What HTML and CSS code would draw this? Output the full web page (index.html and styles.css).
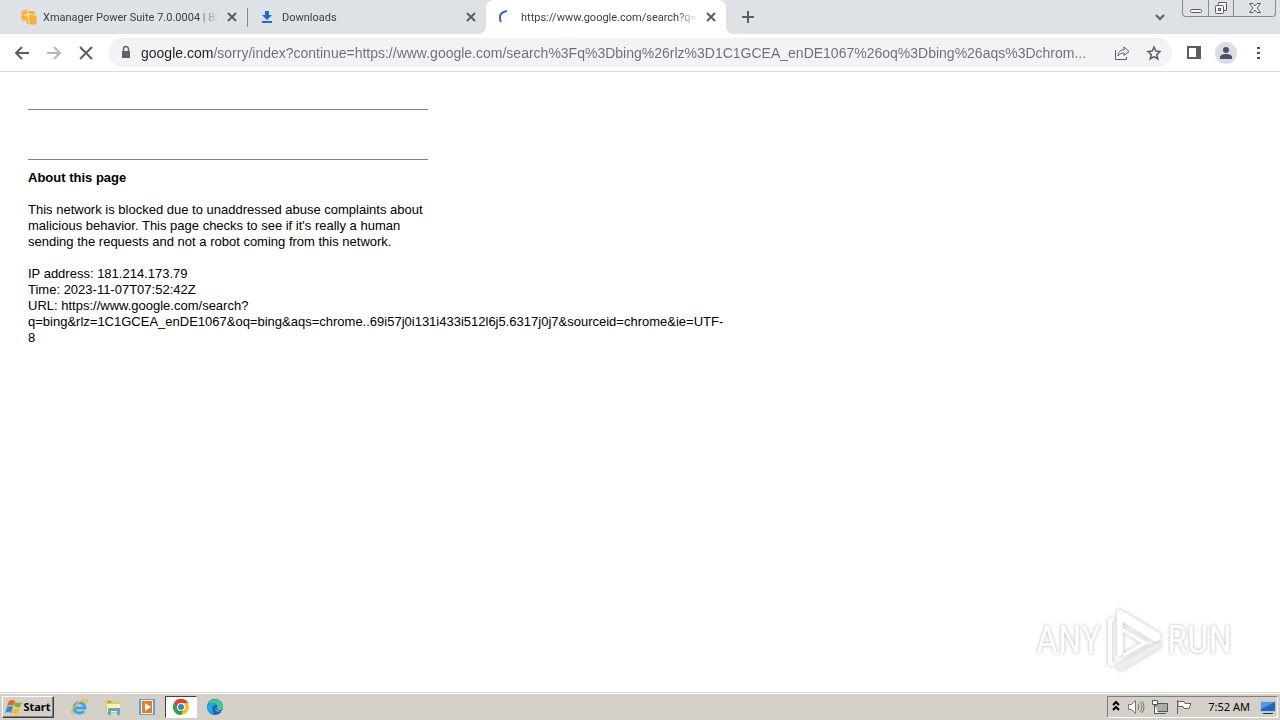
FILE: index.html
```
<!DOCTYPE html>
<html lang="en">
<head>
    <meta charset="utf-8">
    <title>https://www.google.com/search?q=bing</title>
    <link rel="stylesheet" href="styles.css">
</head>
<body>

<header class="browser">
    <div class="tabstrip">
        <div class="tabs">
            <div class="tab">
                <svg class="favicon" viewBox="0 0 16 16"><path fill="#fbb03b" d="M0 3l6-3 2 2h5l2 3 1 9-3 2-7-1-1-4-3 1-2-3 1-2z"/><path d="M6 1l1 4 8 1M3 6l4 0 1 9" fill="none" stroke="#fff3d9"/></svg>
                <span class="tab-title">Xmanager Power Suite 7.0.0004 | Br</span>
                <button class="close" aria-label="Close tab"><svg viewBox="0 0 16 16"><path d="M4 4l8 8M12 4l-8 8"/></svg></button>
            </div>
            <div class="tab divided">
                <svg class="favicon" viewBox="0 0 16 16"><path fill="#1a6dd8" d="M5 2h4v4h3l-5 5-5-5h3zM2 12h10v2H2z"/></svg>
                <span class="tab-title">Downloads</span>
                <button class="close" aria-label="Close tab"><svg viewBox="0 0 16 16"><path d="M4 4l8 8M12 4l-8 8"/></svg></button>
            </div>
            <div class="tab active">
                <svg class="favicon" viewBox="0 0 16 16"><path fill="none" stroke="#3c62d6" stroke-width="2" d="M8 2Q-2 4 2 13"/></svg>
                <span class="tab-title">https://www.google.com/search?q=</span>
                <button class="close" aria-label="Close tab"><svg viewBox="0 0 16 16"><path d="M4 4l8 8M12 4l-8 8"/></svg></button>
            </div>
            <button class="newtab" aria-label="New tab"><svg viewBox="0 0 16 16"><path d="M8 2v12M2 8h12"/></svg></button>
        </div>
        <button class="tabsearch" aria-label="Search tabs"><svg viewBox="0 0 16 16"><path d="M4 6l4 4 4-4"/></svg></button>
        <div class="winctl">
            <button aria-label="Minimize"><svg viewBox="0 0 16 16"><rect x="2.500" y="9.500" width="11" height="3" rx="1"/></svg></button>
            <button aria-label="Restore"><svg viewBox="0 0 16 16"><path d="M5.500 4.500v-2h8v8h-3"/><rect x="2.500" y="5.500" width="8" height="8" rx="1"/><rect x="5.500" y="8.500" width="2" height="2"/></svg></button>
            <button class="wide" aria-label="Close"><svg viewBox="0 0 16 16"><path d="M2.500 3.500h3.500l2 2.500 2-2.500h3.500l-3.500 4.500 3.500 4.500h-3.500l-2-2.500-2 2.500h-3.500l3.500-4.500z"/></svg></button>
        </div>
    </div>
    <div class="toolbar">
        <button class="tool" aria-label="Back"><svg viewBox="0 0 16 16"><path d="M15 8H2M8 2L2 8l6 6"/></svg></button>
        <button class="tool off" aria-label="Forward" disabled><svg viewBox="0 0 16 16"><path d="M1 8h13M8 2l6 6-6 6"/></svg></button>
        <button class="tool" aria-label="Stop"><svg viewBox="0 0 16 16"><path d="M2 2l12 12M14 2L2 14"/></svg></button>
        <div class="omnibox">
            <svg class="lock" viewBox="0 0 16 16"><path fill="#5f6368" d="M4 6h8v7H4z"/><path fill="none" stroke="#5f6368" stroke-width="1.500" d="M5.500 7V4a2.500 2.500 0 0 1 5 0v3"/></svg>
            <input class="url" type="text" aria-label="Address" value="google.com/sorry/index?continue=https://www.google.com/search%3Fq%3Dbing%26rlz%3D1C1GCEA_enDE1067%26oq%3Dbing%26aqs%3Dchrom...">
            <button class="tool" aria-label="Share"><svg viewBox="0 0 16 16"><path class="thin" d="M1.500 5v9.500h11V12M4 11c0-4 2-6 6-6V2l5 4.500-5 4V8c-3 0-4 1-6 3z"/></svg></button>
            <button class="tool" aria-label="Bookmark"><svg viewBox="0 0 16 16"><path class="star" d="M8 2l1.800 4 4.200.5-3.200 3 1 4.500L8 11.700 4.200 14l1-4.500L2 6.500 6.200 6z"/></svg></button>
        </div>
        <button class="tool" aria-label="Side panel"><svg viewBox="0 0 16 16"><path d="M2 2h12v11H2z"/><path d="M12 2v11" stroke-width="4"/></svg></button>
        <button class="tool" aria-label="Profile"><svg class="avatar" viewBox="0 0 22 22"><circle cx="11" cy="11" r="11" fill="#dadde2"/><circle cx="11" cy="8" r="3" fill="#47526e"/><path fill="#47526e" d="M5 17v-2c0-4 12-4 12 0v2z"/></svg></button>
        <button class="tool" aria-label="Menu"><svg viewBox="0 0 16 16"><path class="dots" d="M7 2h3v2H7zM7 7h3v2H7zM7 12h3v2H7z"/></svg></button>
    </div>
</header>

<main class="page">
    <div class="notice">
        <hr>
        <div class="captcha"></div>
        <hr>
        <div class="about">
            <b>About this page</b>
            <p>This network is blocked due to unaddressed abuse complaints about malicious behavior. This page checks to see if it's really a human sending the requests and not a robot coming from this network.</p>
            IP address: 181.214.173.79<br>
            Time: 2023-11-07T07:52:42Z<br>
            URL: https://www.google.com/search?<br>q=bing&amp;rlz=1C1GCEA_enDE1067&amp;oq=bing&amp;aqs=chrome..69i57j0i131i433i512l6j5.6317j0j7&amp;sourceid=chrome&amp;ie=UTF-<wbr>8
        </div>
    </div>
    <div class="watermark">
        <span>ANY</span>
        <svg viewBox="0 0 58 64"><path d="M9 9L3 11v46l6 2v-4l-2-2V14l2-1zM12 3l4-1 40 24-1 6-5 2-32-20v32l-6 4zM18 20l26 15-26 14v-3l18-11-18-11z"/><path class="shade" d="M12 57l38-21 6-2v5L17 62l-5-1z"/></svg>
        <span>RUN</span>
    </div>
</main>

<footer class="taskbar">
    <button class="start">
        <svg viewBox="0 0 18 16"><path fill="#e8602c" d="M4 2q3-2 6 0L8 7Q5 5 2 7z"/><path fill="#73b82c" d="M10 3q3 2 7 0l-2 5q-3 1-6-1z"/><path fill="#368bd6" d="M2 8q3-2 6 0l-2 6q-3-2-6 0z"/><path fill="#f8bd27" d="M8 9q3 2 7 0l-2 6q-3 1-6-1z"/></svg>
        Start
    </button>
    <nav class="apps">
        <button class="app" aria-label="Internet Explorer"><svg viewBox="0 0 18 18"><path fill="none" stroke="#35a5e5" stroke-width="3" d="M4 10h11c0-7-11-7-11 0 0 6 8 6 10 3"/><path fill="none" stroke="#efb92b" stroke-width="1.500" d="M3 16C-2 15 8 3 14 2c4-1 3 2 2 4"/></svg></button>
        <button class="app" aria-label="Explorer"><svg viewBox="0 0 18 18"><path fill="#e9c55c" d="M2 2h6l1 2h7v11H2z"/><path fill="#fff2ae" d="M3 6h13v8H3z"/><path fill="#54a9d7" d="M4 10h12v7h-3v-4H7v4H4z"/><path fill="#64b84b" d="M4 3h3v2H4z"/></svg></button>
        <button class="app" aria-label="Media Player"><svg viewBox="0 0 18 18"><path fill="#5da3db" d="M1 1h16v16H1z"/><path fill="#e6f2fa" d="M3 2h12v14H3z"/><path fill="#ef7d13" d="M4 3h10v12H4z"/><path fill="#fff" d="M7 5l6 4-6 4z"/></svg></button>
        <button class="app current" aria-label="Chrome"><svg viewBox="0 0 18 18"><circle cx="9" cy="9" r="8" fill="#f8c51c"/><path fill="#de4032" d="M2 5a8 8 0 0 1 14 0H9L6 11z"/><path fill="#2da04c" d="M2 5a8 8 0 0 0 7 12l3-6-6 0z"/><circle cx="9" cy="9" r="4" fill="#fff"/><circle cx="9" cy="9" r="3" fill="#3e7fe0"/></svg></button>
        <button class="app" aria-label="Edge"><svg viewBox="0 0 18 18"><circle cx="9" cy="9" r="8" fill="#1267b8"/><path fill="#42c99a" d="M2 6C5-1 17 0 17 9c0 4-6 4-6 1 2-4-4-6-9-4z"/><path fill="#22a8dc" d="M1 9c1-5 8-5 9-2-4 0-5 5-2 9-4 0-7-3-7-7z"/><path fill="#d4d0c8" d="M10 9c-2 4 2 6 7 3v2l-4-1c-3-1-4-2-3-4z"/></svg></button>
    </nav>
    <div class="tray">
        <svg class="more" viewBox="0 0 10 16"><path d="M2 6l3-3 3 3M2 11l3-3 3 3"/></svg>
        <svg viewBox="0 0 18 16"><path fill="#fff" stroke="#777" d="M1.500 5.500h3l4-4v13l-4-4h-3z"/><path fill="none" stroke="#777" d="M11 5q2 3 0 6M13 3q4 5 0 10M15 2q4 6 0 12"/></svg>
        <svg viewBox="0 0 18 16"><path fill="#aaa" stroke="#555" d="M4.500 4.500h12v8h-12zM7 14.500h8"/><path fill="#fff" stroke="#555" d="M1.500 1.500h5v4h-5zM3.500 5.500v9h4"/></svg>
        <svg viewBox="0 0 18 16"><path fill="#fff" stroke="#666" d="M2.500 1v14M3 2.500h6l1 2h6l-2 5H9l-1-2H3z"/></svg>
        <time class="clock">7:52 AM</time>
        <svg viewBox="0 0 18 16"><path fill="#2865b8" stroke="#adc8e6" d="M1.500 2.500h15v10h-15z"/><path fill="#5596dc" d="M2 3h14L2 10z"/><path stroke="#234" d="M4 14.500h10"/></svg>
    </div>
</footer>

</body>
</html>
```
FILE: styles.css
```
* {
    box-sizing: border-box;
}
body {
    margin: 0;
    min-height: 100vh;
    display: flex;
    flex-direction: column;
    background: #fff;
    font-family: "Liberation Sans", Arial, sans-serif;
    font-size: 13px;
}
button {
    display: flex;
    align-items: center;
    justify-content: center;
    flex: none;
    margin: 0;
    padding: 0;
    border: 0;
    background: none;
    font: inherit;
}
svg {
    display: block;
    flex: none;
    width: 16px;
    height: 16px;
}
button svg {
    fill: none;
    stroke: #5a5e63;
    stroke-width: 2;
}

/* tabs */
.tabstrip {
    display: flex;
    height: 34px;
    padding: 0 4px 0 8px;
    background: #dee1e6;
}
.tabs {
    display: flex;
    flex: 1;
    min-width: 0;
}
.tab {
    position: relative;
    display: flex;
    align-items: center;
    gap: 6px;
    flex: 0 1 239px;
    min-width: 0;
    padding: 0 7px 0 13px;
    color: #3c4043;
    font-family: Roboto, Tahoma, sans-serif;
    font-size: 11px;
}
.tab.divided::before {
    content: "";
    position: absolute;
    left: 0;
    top: 8px;
    height: 19px;
    border-left: 1px solid #85888d;
}
.tab.active {
    flex-basis: 240px;
    background: #fff;
    border-radius: 8px 8px 0 0;
}
.tab.active::before,
.tab.active::after {
    content: "";
    position: absolute;
    bottom: 0;
    width: 8px;
    height: 8px;
}
.tab.active::before {
    left: -8px;
    background: radial-gradient(circle at 0 0, transparent 8px, #fff 8px);
}
.tab.active::after {
    right: -8px;
    background: radial-gradient(circle at 100% 0, transparent 8px, #fff 8px);
}
.tab-title {
    flex: 1;
    overflow: hidden;
    white-space: nowrap;
    -webkit-mask-image: linear-gradient(to left, transparent, #000 20px);
    mask-image: linear-gradient(to left, transparent, #000 20px);
}
.newtab {
    width: 32px;
    margin-left: 6px;
}
.tabsearch {
    width: 32px;
    margin-right: 6px;
}
.winctl {
    display: flex;
    height: 17px;
    border: 1px solid #85898f;
    border-top: 0;
    border-radius: 0 0 4px 4px;
}
.winctl button {
    width: 25px;
}
.winctl button + button {
    border-left: 1px solid #85898f;
}
.winctl .wide {
    width: 42px;
}
.winctl svg {
    fill: #f4f5f6;
    stroke-width: 1;
}

/* toolbar */
.toolbar {
    display: flex;
    align-items: center;
    height: 38px;
    padding: 0 6px;
    border-bottom: 1px solid #d9dbde;
}
.tool {
    width: 32px;
    height: 28px;
}
.tool.off svg {
    stroke: #b4b6b9;
}
.tool .thin {
    stroke-width: 1;
}
.tool .star {
    stroke-width: 1.5;
}
.tool .dots {
    fill: #50545a;
    stroke: none;
}
.tool .avatar {
    width: 22px;
    height: 22px;
    stroke: none;
}
.omnibox {
    display: flex;
    align-items: center;
    flex: 1;
    min-width: 0;
    height: 29px;
    margin: 0 6px;
    padding: 0 2px 0 10px;
    border-radius: 15px;
    background: #f1f3f4;
}
.lock {
    margin-right: 7px;
}
.url {
    flex: 1;
    min-width: 0;
    padding: 0;
    border: 0;
    outline: 0;
    /* host is darker than the rest of the address */
    background: linear-gradient(to right, #202124 72px, #6b6f74 72px);
    -webkit-background-clip: text;
    background-clip: text;
    color: transparent;
    font-family: "Liberation Sans", Arial, sans-serif;
    font-size: 14px;
}

/* page */
.page {
    position: relative;
    flex: 1;
    padding: 37px 28px;
}
.notice {
    max-width: 400px;
    line-height: 16px;
}
hr {
    margin: 0;
    border: 0;
    border-top: 1px solid #808080;
}
.captcha {
    height: 49px;
}
.about {
    padding-top: 10px;
}
.about p {
    margin: 16px 0;
}
.watermark {
    position: absolute;
    right: 48px;
    bottom: 20px;
    display: flex;
    align-items: center;
    gap: 4px;
    color: #fff;
    font-family: "Roboto Condensed", "Liberation Sans", sans-serif;
    font-size: 38px;
    line-height: 64px;
    text-shadow: 0 0 3px #aaa;
}
.watermark svg {
    width: 58px;
    height: 64px;
    fill: #fff;
    filter: drop-shadow(0 0 2px #bbb);
}
.watermark .shade {
    fill: #eee;
}

/* taskbar */
.taskbar {
    display: flex;
    align-items: center;
    height: 28px;
    padding: 1px 2px;
    border-top: 1px solid #d4d0c8;
    box-shadow: inset 0 1px #fff;
    background: #d4d0c8;
    font-family: "Noto Sans", Tahoma, sans-serif;
    font-size: 11px;
}
.start {
    width: 52px;
    height: 22px;
    border: 1px solid;
    border-color: #fff #404040 #404040 #fff;
    box-shadow: inset -1px -1px #808080;
    font-weight: bold;
}
.start svg {
    width: 18px;
    stroke: none;
}
.apps {
    display: flex;
    flex: 1;
    gap: 2px;
    margin-left: 9px;
}
.app {
    width: 32px;
    height: 22px;
}
.app svg {
    width: 18px;
    height: 18px;
    stroke: none;
}
.app.current {
    border: 1px solid;
    border-color: #404040 #fff #fff #404040;
    background: #fff;
}
.tray {
    display: flex;
    align-items: center;
    gap: 6px;
    height: 22px;
    padding: 0 0 0 3px;
    border: 1px solid;
    border-color: #808080 #fff #fff #808080;
}
.tray svg {
    width: 18px;
}
.tray .more {
    width: 10px;
    fill: none;
    stroke: #000;
    stroke-width: 2;
}
.clock {
    margin: 0 3px 0 9px;
}
```
